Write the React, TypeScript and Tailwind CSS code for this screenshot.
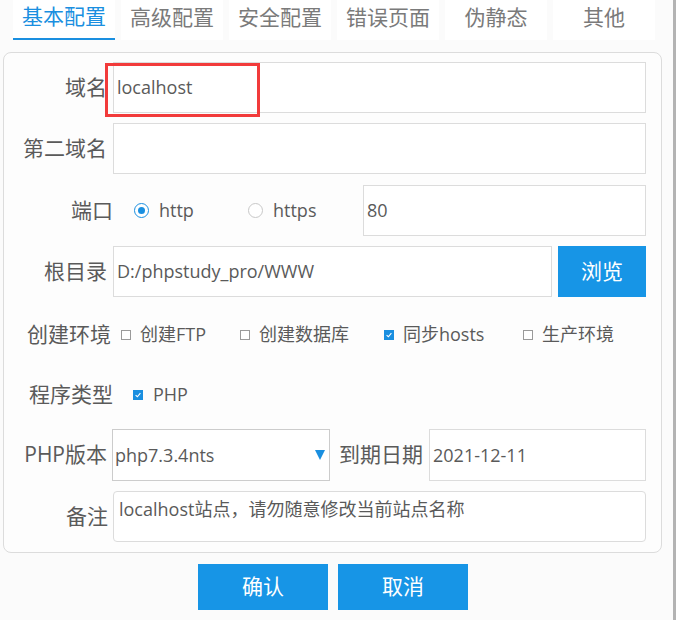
import React from "react";

const tabs = ["基本配置", "高级配置", "安全配置", "错误页面", "伪静态", "其他"];

function Box({ checked }: { checked?: boolean }) {
  if (checked) {
    return (
      <span className="flex h-[10px] w-[10px] shrink-0 items-center justify-center bg-[#1a8fe0]">
        <svg viewBox="0 0 10 10" className="h-[8px] w-[8px]">
          <path d="M2 5.2 L4.2 7.2 L8 2.8" fill="none" stroke="#fff" strokeWidth={1.4} />
        </svg>
      </span>
    );
  }
  return <span className="block h-[10px] w-[10px] shrink-0 border border-[#9a9a9a] bg-white" />;
}

function Radio({ checked }: { checked?: boolean }) {
  return (
    <span
      className={
        checked
          ? "flex h-[15px] w-[15px] shrink-0 items-center justify-center rounded-full border border-[#1a8fe0] bg-white"
          : "block h-[15px] w-[15px] shrink-0 rounded-full border border-[#c8c8c8] bg-white"
      }
    >
      {checked && <span className="block h-[7px] w-[7px] rounded-full bg-[#1a8fe0]" />}
    </span>
  );
}

export default function App() {
  return (
    <div className="relative flex h-[620px] w-[676px] overflow-hidden bg-[#fbfbfb] font-['Open_Sans','Noto_Sans_CJK_SC',sans-serif] text-[#5a5a5a]">
      <div className="flex w-[673px] flex-col">
        {/* tabs */}
        <div className="flex gap-[6px] pl-[13px]">
          {tabs.map((t, i) => (
            <div
              key={t}
              className={
                i === 0
                  ? "flex h-[40px] w-[102px] items-center justify-center border-b-2 border-[#1a8fe0] bg-white pb-[4px] text-[21px] text-[#1a8fe0]"
                  : "flex h-[40px] w-[102px] items-center justify-center bg-white pb-[4px] text-[21px] text-[#7a7a7a]"
              }
            >
              {t}
            </div>
          ))}
        </div>

        {/* panel */}
        <div className="ml-[3px] mt-[12px] flex h-[501px] w-[659px] flex-col rounded-[8px] border border-[#dcdcdc] bg-[#fdfdfd] pr-[15px] pt-[9px]">
          <div className="flex h-[51px] items-center">
            <div className="w-[103px] text-right text-[21px]">域名</div>
            <div className="ml-[6px] flex h-full flex-1 items-center border border-[#dcdcdc] bg-white pl-[3px] text-[18px]">
              localhost
            </div>
          </div>

          <div className="mt-[10px] flex h-[51px] items-center">
            <div className="w-[103px] text-right text-[21px]">第二域名</div>
            <div className="ml-[6px] h-full flex-1 border border-[#dcdcdc] bg-white" />
          </div>

          <div className="mt-[11px] flex h-[51px] items-center">
            <div className="w-[109px] text-right text-[21px]">端口</div>
            <div className="ml-[21px] flex w-[114px] items-center gap-[10px] text-[18px]">
              <Radio checked />
              <span>http</span>
            </div>
            <div className="flex w-[115px] items-center gap-[10px] text-[18px]">
              <Radio />
              <span>https</span>
            </div>
            <div className="flex h-full flex-1 items-center border border-[#dcdcdc] bg-white pl-[3px] text-[18px]">
              80
            </div>
          </div>

          <div className="mt-[10px] flex h-[51px] items-center">
            <div className="w-[103px] text-right text-[21px]">根目录</div>
            <div className="ml-[6px] flex h-full flex-1 items-center border border-[#dcdcdc] bg-white pl-[3px] text-[18px]">
              D:/phpstudy_pro/WWW
            </div>
            <button className="ml-[6px] h-full w-[88px] bg-[#1795e6] text-[21px] text-white">浏览</button>
          </div>

          <div className="mt-[12px] flex h-[51px] items-center">
            <div className="ml-[23px] text-[21px]">创建环境</div>
            <div className="ml-[10px] flex w-[119px] items-center gap-[9px] text-[18px]">
              <Box />
              <span>创建FTP</span>
            </div>
            <div className="flex w-[144px] items-center gap-[9px] text-[18px]">
              <Box />
              <span>创建数据库</span>
            </div>
            <div className="flex w-[139px] items-center gap-[9px] text-[18px]">
              <Box checked />
              <span>同步hosts</span>
            </div>
            <div className="flex items-center gap-[9px] text-[18px]">
              <Box />
              <span>生产环境</span>
            </div>
          </div>

          <div className="mt-[9px] flex h-[51px] items-center">
            <div className="ml-[25px] text-[21px]">程序类型</div>
            <div className="ml-[20px] flex items-center gap-[10px] text-[18px]">
              <Box checked />
              <span>PHP</span>
            </div>
          </div>

          <div className="mt-[9px] flex h-[52px] items-center">
            <div className="w-[103px] text-right text-[21px]">PHP版本</div>
            <div className="ml-[5px] flex h-full w-[218px] items-center justify-between border border-[#cccccc] bg-white pl-[2px] pr-[4px] text-[18px]">
              <span>php7.3.4nts</span>
              <svg viewBox="0 0 10 10" className="h-[10px] w-[10px]">
                <path d="M0 0 L10 0 L5 10 Z" fill="#1a8fe0" />
              </svg>
            </div>
            <div className="ml-[9px] text-[21px]">到期日期</div>
            <div className="ml-[6px] flex h-full flex-1 items-center border border-[#dcdcdc] bg-white pl-[3px] text-[18px]">
              2021-12-11
            </div>
          </div>

          <div className="mt-[10px] flex h-[51px] items-center">
            <div className="w-[104px] text-right text-[21px]">备注</div>
            <div className="ml-[5px] h-full flex-1 rounded-[4px] border border-[#dcdcdc] bg-white pl-[5px] pt-[4px] text-[18px] leading-[26px]">
              localhost站点，请勿随意修改当前站点名称
            </div>
          </div>
        </div>

        {/* actions */}
        <div className="mt-[11px] flex justify-center gap-[10px] pr-[7px]">
          <button className="h-[46px] w-[130px] bg-[#1795e6] text-[21px] text-white">确认</button>
          <button className="h-[46px] w-[130px] bg-[#1795e6] text-[21px] text-white">取消</button>
        </div>
      </div>

      {/* scrollbar edge */}
      <div className="w-[3px] bg-[#b3b3b3]" />

      {/* annotation box */}
      <div className="absolute left-[105px] top-[63px] h-[54px] w-[155px] border-[3px] border-[#f23b3b]" />
    </div>
  );
}
